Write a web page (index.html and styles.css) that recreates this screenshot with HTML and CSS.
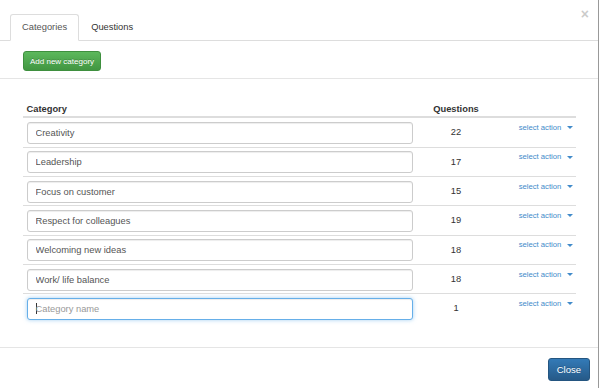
FILE: index.html
```html
<!DOCTYPE html>
<html lang="en">
    <head>
        <meta charset="UTF-8" />
        <title>Categories</title>
        <link rel="stylesheet" href="styles.css">
    </head>
    <body>
        <div class="modal">
            <div class="tabs-bar">
                <ul class="tabs">
                    <li class="tab active">Categories</li>
                    <li class="tab">Questions</li>
                </ul>
                <span class="close">&times;</span>
            </div>

            <div class="toolbar">
                <button class="btn btn-green">Add new category</button>
            </div>

            <div class="modal-body">
                <table class="list">
                    <thead>
                        <tr>
                            <th class="col-name">Category</th>
                            <th class="col-count">Questions</th>
                            <th class="col-action"></th>
                        </tr>
                    </thead>
                    <tbody>
                        <tr>
                            <td><input class="field" type="text" value="Creativity"></td>
                            <td class="count">22</td>
                            <td class="action"><a href="#">select action <span class="caret"></span></a></td>
                        </tr>
                        <tr>
                            <td><input class="field" type="text" value="Leadership"></td>
                            <td class="count">17</td>
                            <td class="action"><a href="#">select action <span class="caret"></span></a></td>
                        </tr>
                        <tr>
                            <td><input class="field" type="text" value="Focus on customer"></td>
                            <td class="count">15</td>
                            <td class="action"><a href="#">select action <span class="caret"></span></a></td>
                        </tr>
                        <tr>
                            <td><input class="field" type="text" value="Respect for colleagues"></td>
                            <td class="count">19</td>
                            <td class="action"><a href="#">select action <span class="caret"></span></a></td>
                        </tr>
                        <tr>
                            <td><input class="field" type="text" value="Welcoming new ideas"></td>
                            <td class="count">18</td>
                            <td class="action"><a href="#">select action <span class="caret"></span></a></td>
                        </tr>
                        <tr>
                            <td><input class="field" type="text" value="Work/ life balance"></td>
                            <td class="count">18</td>
                            <td class="action"><a href="#">select action <span class="caret"></span></a></td>
                        </tr>
                        <tr>
                            <td>
                                <div class="field focus"><span class="cursor"></span><span class="placeholder">Category name</span></div>
                            </td>
                            <td class="count">1</td>
                            <td class="action"><a href="#">select action <span class="caret"></span></a></td>
                        </tr>
                    </tbody>
                </table>
            </div>

            <div class="modal-footer">
                <button class="btn btn-blue">Close</button>
            </div>
        </div>
    </body>
</html>
```

FILE: styles.css
```css
body {
    margin: 0;
    background: #fff;
    font-family: "Liberation Sans", Arial, sans-serif;
    font-size: 9.33px;
    line-height: 1.43;
    color: #333;
}

.modal {
    width: 598px;
    height: 388px;
    border-right: 1px solid #999;
    background: #fff;
}

/* tabs */
.tabs-bar {
    display: flex;
    justify-content: space-between;
    align-items: flex-start;
    padding: 14px 0 0 10px;
    border-bottom: 1px solid #ddd;
}
.tabs {
    display: flex;
    margin: 0 0 -1px 0;
    padding: 0;
    list-style: none;
}
.tab {
    height: 25px;
    line-height: 25px;
    padding: 0 11px;
    border: 1px solid transparent;
    border-radius: 3px 3px 0 0;
    color: #333;
}
.tab.active {
    color: #555;
    background: #fff;
    border-color: #ddd #ddd transparent;
}
.close {
    margin: -10px 9px 0 0;
    font-size: 14px;
    font-weight: bold;
    color: #000;
    opacity: 0.2;
}

/* toolbar */
.toolbar {
    padding: 10px 23px 7px;
    border-bottom: 1px solid #e5e5e5;
}

.btn {
    font-family: inherit;
    border-radius: 3px;
    color: #fff;
    cursor: pointer;
}
.btn-green {
    height: 20px;
    padding: 0 6px;
    font-size: 8px;
    background: linear-gradient(#5cb85c, #419641);
    border: 1px solid #3e8f3e;
    text-shadow: 0 -1px 0 rgba(0,0,0,.2);
}
.btn-blue {
    height: 23px;
    padding: 0 8px;
    font-size: 9.5px;
    background: linear-gradient(#337ab7, #265a88);
    border: 1px solid #245580;
    text-shadow: 0 -1px 0 rgba(0,0,0,.2);
}

/* table */
.modal-body {
    padding: 18px 0 24.33px 23px;
}
.list {
    width: 553px;
    border-collapse: collapse;
}
.list th {
    padding: 5.5px 3.5px 0.5px;
    border-bottom: 2px solid #ddd;
    text-align: left;
    font-weight: bold;
}
.list th.col-count {
    text-align: center;
}
.col-name { width: 386px; }
.col-count { width: 73px; }

.list td {
    padding: 3.67px 3.5px 2.67px;
    border-top: 1px solid #ddd;
    vertical-align: middle;
}
.list tbody tr:first-child td {
    border-top: 0;
}
.list td.count {
    text-align: center;
}
.list td.action {
    vertical-align: top;
    text-align: right;
    font-size: 7.7px;
    line-height: 11px;
}
.action a {
    color: #428bca;
    text-decoration: none;
}
.caret {
    display: inline-block;
    width: 0;
    height: 0;
    margin-left: 3px;
    vertical-align: middle;
    border-top: 3px solid #428bca;
    border-left: 3px solid transparent;
    border-right: 3px solid transparent;
}

.field {
    display: block;
    box-sizing: border-box;
    width: 100%;
    height: 22px;
    margin: 0;
    padding: 0 8px;
    font-family: inherit;
    font-size: 9.33px;
    line-height: 20px;
    color: #555;
    background: #fff;
    border: 1px solid #ccc;
    border-radius: 3px;
    box-shadow: inset 0 1px 1px rgba(0,0,0,.075);
}
.field.focus {
    border-color: #66afe9;
    box-shadow: inset 0 1px 1px rgba(0,0,0,.075), 0 0 4px rgba(102,175,233,.6);
}
.cursor {
    display: inline-block;
    width: 1px;
    height: 11px;
    margin-right: -1px;
    vertical-align: -2px;
    background: #333;
}
.placeholder {
    color: #999;
}

/* footer */
.modal-footer {
    display: flex;
    justify-content: flex-end;
    padding: 10px 8px;
    border-top: 1px solid #e5e5e5;
}
```
